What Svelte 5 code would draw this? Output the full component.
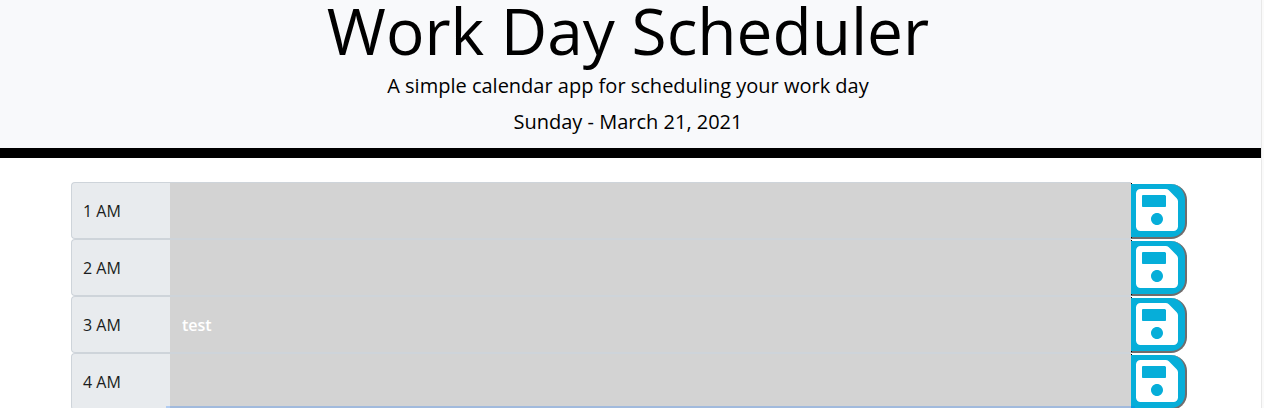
<script>
  let rows = $state([
    { hour: '1 AM', text: '' },
    { hour: '2 AM', text: '' },
    { hour: '3 AM', text: 'test' },
    { hour: '4 AM', text: '' },
    { hour: '5 AM', text: '', active: true }
  ]);
</script>

<div class="page">
  <div class="content">
    <header>
      <h1>Work Day Scheduler</h1>
      <p>A simple calendar app for scheduling your work day</p>
      <p>Sunday - March 21, 2021</p>
    </header>
    <main>
      {#each rows as row, i}
        <div class="row">
          <label for={`slot-${i}`}>{row.hour}</label>
          <input id={`slot-${i}`} class:active={row.active} type="text" bind:value={row.text} />
          <button type="button" aria-label={`Save ${row.hour}`}>
            <svg viewBox="0 0 448 512" width="42" height="48" aria-hidden="true">
              <path fill="#fff" d="M433.941 129.941l-83.882-83.882A48 48 0 0 0 316.118 32H48C21.49 32 0 53.49 0 80v352c0 26.51 21.49 48 48 48h352c26.51 0 48-21.49 48-48V163.882a48 48 0 0 0-14.059-33.941zM224 416c-35.346 0-64-28.654-64-64 0-35.346 28.654-64 64-64s64 28.654 64 64c0 35.346-28.654 64-64 64zm96-304.52V212c0 6.627-5.373 12-12 12H76c-6.627 0-12-5.373-12-12V108c0-6.627 5.373-12 12-12h228.52c3.183 0 6.235 1.264 8.485 3.515l3.48 3.48A11.996 11.996 0 0 1 320 111.48z" />
            </svg>
          </button>
        </div>
      {/each}
    </main>
  </div>
  <div class="gutter"></div>
</div>

<style>
  :global(body) {
    margin: 0;
    background: #fff;
  }
  .page {
    display: flex;
    height: 100vh;
    overflow: hidden;
    font-family: 'Open Sans', sans-serif;
    font-size: 16px;
    line-height: 24px;
    color: #1a1d20;
  }
  .content {
    flex: 1;
    min-width: 0;
  }
  .gutter {
    width: 2px;
    background: #fafafa;
    border-left: 1px solid #e8e8e8;
  }
  header {
    padding: 0 5px 8px 0;
    text-align: center;
    color: #000;
    background: #f8f9fb;
    border-bottom: 10px solid #000;
  }
  h1 {
    margin: 0;
    padding-bottom: 6px;
    font-size: 64px;
    line-height: 62px;
    font-weight: 400;
  }
  p {
    margin: 0;
    font-size: 20px;
    line-height: 36px;
  }
  main {
    padding: 24px 74px 0 71px;
  }
  .row {
    display: flex;
    height: 57px;
  }
  label {
    box-sizing: border-box;
    display: flex;
    align-items: center;
    width: 99px;
    padding-left: 11px;
    background: #e8ebee;
    border: 1px solid #ced4da;
    border-right: 0;
    border-radius: 4px 0 0 4px;
  }
  input {
    box-sizing: border-box;
    flex: 1;
    min-width: 0;
    padding: 0 12px;
    font: inherit;
    font-weight: 600;
    color: #fff;
    background: #d3d3d3;
    border: solid #ced4da;
    border-width: 1px 0;
    border-radius: 0;
    outline: 0;
  }
  input.active {
    position: relative;
    z-index: 1;
    box-shadow: 0 0 0 4px rgba(13, 110, 253, 0.25);
  }
  button {
    box-sizing: border-box;
    position: relative;
    display: flex;
    align-items: flex-start;
    width: 56px;
    height: 55px;
    margin-top: 2px;
    padding: 2px 0 0 5px;
    background: #06aed9;
    border: solid #706c6c;
    border-width: 0 2px 2px 0;
    border-radius: 0 16px 16px 0;
  }
  button::before {
    content: '';
    position: absolute;
    top: -1px;
    left: 0;
    width: 1px;
    height: 1px;
    background: #000;
    box-shadow: 0 54px #000;
  }
  svg {
    display: block;
  }
</style>
